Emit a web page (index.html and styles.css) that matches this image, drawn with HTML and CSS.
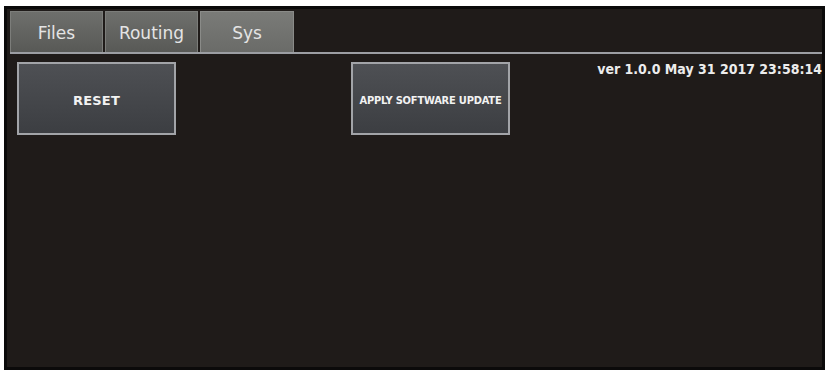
FILE: index.html
```html
<!DOCTYPE html>
<html>
<head>
<meta charset="utf-8">
<link rel="stylesheet" href="styles.css">
</head>
<body>
<div class="frame">
  <div class="tabbar">
    <div class="tab">Files</div>
    <div class="tab">Routing</div>
    <div class="tab active">Sys</div>
  </div>
  <div class="content">
    <button class="btn reset">RESET</button>
    <button class="btn update">APPLY SOFTWARE UPDATE</button>
    <div class="version">ver 1.0.0 May 31 2017 23:58:14</div>
  </div>
</div>
</body>
</html>
```
FILE: styles.css
```css
html, body {
  margin: 0;
  padding: 0;
  background: #ffffff;
}
body {
  padding: 6px 3px 4px 4px;
  width: 828px;
  height: 374px;
  box-sizing: border-box;
  overflow: hidden;
}
.frame {
  width: 821px;
  height: 364px;
  box-sizing: border-box;
  background: #1f1b19;
  border: 3px solid #0b0a0a;
  padding: 2px 0 0 3px;
  font-family: "DejaVu Sans", sans-serif;
}
.tabbar {
  display: flex;
  gap: 2px;
  height: 41px;
  border-bottom: 2px solid #9c9ea3;
}
.tab {
  width: 93px;
  height: 41px;
  box-sizing: border-box;
  background: linear-gradient(#6e6f6c, #585956);
  border: 1px solid #7c7d7a;
  border-bottom: none;
  color: #e4e4e4;
  font-size: 17px;
  display: flex;
  align-items: center;
  justify-content: center;
  padding-top: 2px;
}
.tab.active {
  background: linear-gradient(#7a7b78, #6a6b68);
  border-color: #8a8b88;
  width: 94px;
}
.content {
  display: flex;
  align-items: flex-start;
  padding-top: 8px;
  padding-left: 7px;
}
.btn {
  width: 159px;
  height: 73px;
  box-sizing: border-box;
  border: 2px solid #a2a4a8;
  background: linear-gradient(#4e5054, #3c3e42);
  color: #f2f2f2;
  font-family: "DejaVu Sans", sans-serif;
  font-weight: bold;
  padding: 3px 0 0 0;
  margin: 0;
}
.reset {
  font-size: 13px;
  letter-spacing: 0.2px;
}
.update {
  margin-left: 175px;
  font-size: 11px;
  font-stretch: condensed;
  letter-spacing: -0.2px;
}
.version {
  margin-left: auto;
  margin-right: 0;
  margin-top: -1px;
  color: #ececec;
  font-weight: bold;
  font-size: 14px;
  font-stretch: condensed;
  white-space: nowrap;
}
```
